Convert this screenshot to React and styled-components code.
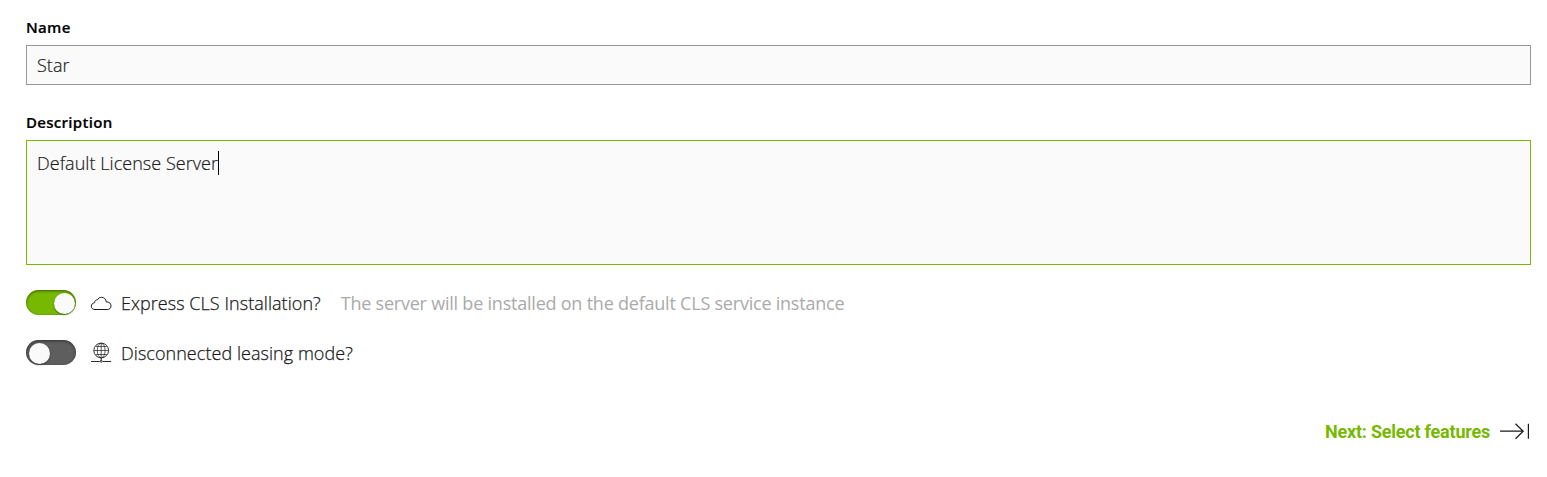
import React from 'react';
import styled, { createGlobalStyle } from 'styled-components';

const GlobalStyle = createGlobalStyle`
  * { box-sizing: border-box; }
  body { margin: 0; background: #fff; color: #1a1a1a; font-family: "Open Sans", sans-serif; }
`;

const Form = styled.form`
  display: flex;
  flex-direction: column;
  height: 477px;
  padding: 17px 16px 0 26px;
`;

const Label = styled.label`
  height: 20px;
  margin-bottom: 8px;
  font-size: 15px;
  line-height: 20px;
  font-weight: 600;
  letter-spacing: 0.3px;
  color: #000;
  -webkit-text-stroke: 0.2px currentColor;
`;

const Field = styled.div`
  display: flex;
  height: ${(p) => p.$height}px;
  margin-bottom: ${(p) => p.$gap}px;
  padding: ${(p) => (p.$focused ? 10 : 7)}px 10px;
  border: 1px solid ${(p) => (p.$focused ? '#76b900' : '#999')};
  background: #fafafa;
  font-size: 18px;
  line-height: 25px;
  font-weight: 300;
  letter-spacing: 0.04px;
  -webkit-text-stroke: 0.2px currentColor;
`;

const Caret = styled.span`
  width: 1px;
  height: 24px;
  background: #000;
`;

const OptionRow = styled.div`
  display: flex;
  align-items: center;
  height: 26px;
  margin-bottom: 24px;
  font-size: 18px;
  line-height: 26px;
  font-weight: 300;
  letter-spacing: 0.05px;
  white-space: nowrap;
`;

const OptionLabel = styled.span`
  -webkit-text-stroke: 0.25px currentColor;
`;

const Toggle = styled.span`
  display: flex;
  align-self: flex-start;
  justify-content: ${(p) => (p.$on ? 'flex-end' : 'flex-start')};
  width: 50px;
  height: 25px;
  padding: 2px ${(p) => (p.$on ? 1.5 : 2.5)}px;
  border-radius: 13px;
  background: ${(p) => (p.$on ? '#76b900' : '#5e5e5e')};
  box-shadow: inset 0 1px 3px rgba(0, 0, 0, 0.5);
`;

const Knob = styled.span`
  width: 21px;
  height: 21px;
  margin-top: 0.5px;
  border-radius: 50%;
  background: #fafafa;
  box-shadow: 0 1px 2px rgba(0, 0, 0, 0.4);
`;

const Icon = styled.svg`
  flex: none;
  margin: 0 10px 0 15px;
  overflow: visible;
  fill: none;
  stroke: #1a1a1a;
`;

const Hint = styled.span`
  margin-left: 20px;
  color: #aaa;
  font-weight: 400;
  letter-spacing: -0.22px;
`;

const Footer = styled.div`
  display: flex;
  justify-content: flex-end;
  margin-top: 30px;
`;

const NextButton = styled.button`
  display: flex;
  align-items: center;
  gap: 10px;
  padding: 0 1px 0 0;
  border: 0;
  background: none;
  color: #76b900;
  font: 700 18px/24px Roboto, sans-serif;
  letter-spacing: -0.22px;
`;

export default function App() {
  return (
    <>
      <GlobalStyle />
      <Form>
        <Label>Name</Label>
        <Field $height={40} $gap={27}>Star</Field>
        <Label>Description</Label>
        <Field $height={125} $gap={25} $focused>
          <span>Default License Server</span>
          <Caret />
        </Field>
        <OptionRow>
          <Toggle $on><Knob /></Toggle>
          <Icon width="20" height="20" viewBox="0 0 20 20">
            <path d="M4 16.5C1.7 16.5.3 15.3.3 13.2c0-1.8 1.3-3.2 3.3-3.5C3.6 7.8 5 6.7 6.5 6.9 7.2 5.2 8.7 4.3 10.5 4.3c2.7 0 4.5 1.8 4.8 4.6 2.6-.2 4.7 1.5 4.7 4 0 2.1-1.4 3.6-3.7 3.6z" />
          </Icon>
          <OptionLabel>Express CLS Installation?</OptionLabel>
          <Hint>The server will be installed on the default CLS service instance</Hint>
        </OptionRow>
        <OptionRow>
          <Toggle><Knob /></Toggle>
          <Icon width="20" height="20" viewBox="0 0 20 20" strokeWidth="0.9">
            <circle cx="10.2" cy="7.5" r="7.4" />
            <ellipse cx="10.2" cy="7.5" rx="3.9" ry="7.3" strokeWidth="0.7" />
            <path d="M3 7.5h14.5M4.6 3.5h11.2M4.6 11.5h11.2M10.2 .5v14" strokeWidth="0.7" />
            <path d="M10.2 14.8v2.5M0 18.5h8.7M11.7 18.5h8.5" />
            <circle cx="10.2" cy="18.3" r="1" />
          </Icon>
          <OptionLabel>Disconnected leasing mode?</OptionLabel>
        </OptionRow>
        <Footer>
          <NextButton type="button">
            <span>Next: Select features</span>
            <svg width="30" height="18" viewBox="0 0 30 18" fill="none" stroke="#1a1a1a" strokeWidth="1.2">
              <path d="M0 8.2h23M15.5 .7l7.7 7.5-7.7 7.5M28.4 .7v15" />
            </svg>
          </NextButton>
        </Footer>
      </Form>
    </>
  );
}
